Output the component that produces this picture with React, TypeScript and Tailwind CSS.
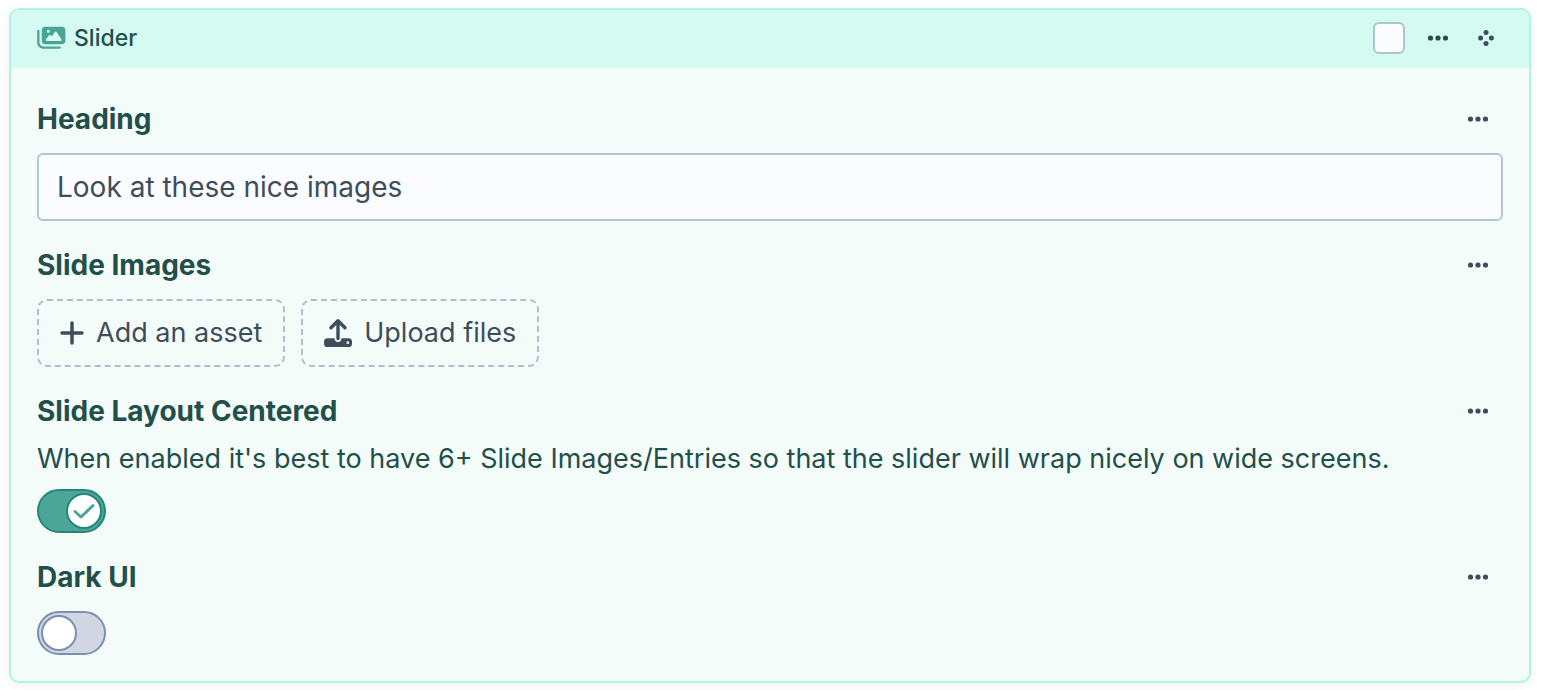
import { useId, useState, type ReactNode } from "react";

function SliderIcon() {
  return (
    <svg viewBox="0 0 29 24" className="h-6 w-[29px] shrink-0 text-[#4aa596]" aria-hidden="true">
      <path
        d="M1.3 5V16.600a5 5 0 0 0 5 5H22.8"
        fill="none"
        stroke="currentColor"
        strokeWidth="2.300"
        strokeLinecap="round"
      />
      <path
        fillRule="evenodd"
        fill="currentColor"
        d="M8.400 .8h16.400a3.600 3.600 0 0 1 3.600 3.600v10.200a3.600 3.600 0 0 1-3.600 3.600H8.400a3.600 3.600 0 0 1-3.600-3.600V4.400a3.600 3.600 0 0 1 3.600-3.600ZM11.300 3.800a1.500 1.500 0 1 0 0 3 1.500 1.500 0 0 0 0-3ZM18.700 5.600a1.100 1.100 0 0 0-.9.500l-3 4.500-1-1.300a1.100 1.100 0 0 0-1.700 0l-3 4a1.100 1.100 0 0 0 .9 1.800h13.600a1.100 1.100 0 0 0 .9-1.700l-4.900-7.300a1.100 1.100 0 0 0-.9-.5Z"
      />
    </svg>
  );
}

function DotsIcon() {
  return (
    <svg viewBox="0 0 22 6" className="h-[6px] w-[22px]" fill="currentColor" aria-hidden="true">
      <circle cx="3.500" cy="3" r="2.600" />
      <circle cx="11" cy="3" r="2.600" />
      <circle cx="18.500" cy="3" r="2.600" />
    </svg>
  );
}

function MoveIcon() {
  return (
    <svg viewBox="0 0 18 18" className="size-[18px]" fill="currentColor" aria-hidden="true">
      <circle cx="9" cy="3.600" r="2.500" />
      <circle cx="3.600" cy="9" r="2.500" />
      <circle cx="14.400" cy="9" r="2.500" />
      <circle cx="9" cy="14.400" r="2.500" />
    </svg>
  );
}

function PlusIcon() {
  return (
    <svg viewBox="0 0 24 24" className="size-6" aria-hidden="true">
      <path d="M12 2v20M2 12h20" fill="none" stroke="currentColor" strokeWidth="3.500" strokeLinecap="round" />
    </svg>
  );
}

function UploadIcon() {
  return (
    <svg viewBox="0 0 28 28" className="size-7" aria-hidden="true">
      <path
        fillRule="evenodd"
        fill="currentColor"
        d="M3.500 19.200h7.100v.3a3.400 3.400 0 0 0 6.800 0v-.3h7.100a3.500 3.500 0 0 1 3.500 3.500v2a3.500 3.500 0 0 1-3.500 3.500H3.500A3.500 3.500 0 0 1 0 24.700v-2a3.500 3.500 0 0 1 3.500-3.500ZM23.800 22.300a1.400 1.400 0 1 0 0 2.800 1.400 1.400 0 0 0 0-2.800Z"
      />
      <path
        d="M14 19.500V2.200M7 8.800l7-7 7 7"
        fill="none"
        stroke="currentColor"
        strokeWidth="3.400"
        strokeLinecap="round"
        strokeLinejoin="round"
      />
    </svg>
  );
}

function CheckIcon() {
  return (
    <svg viewBox="0 0 22 18" className="h-[18px] w-[22px] text-[#4aa596]" aria-hidden="true">
      <path
        d="M2 9.500l6 5.500L20 3.500"
        fill="none"
        stroke="currentColor"
        strokeWidth="3"
        strokeLinecap="round"
        strokeLinejoin="round"
      />
    </svg>
  );
}

interface FieldProps {
  label: string;
  htmlFor?: string;
  instructions?: string;
  children: ReactNode;
}

function Field({ label, htmlFor, instructions, children }: FieldProps) {
  return (
    <div>
      <div className="flex h-9 items-center justify-between">
        {htmlFor ? (
          <label htmlFor={htmlFor} className="text-[28px] leading-9 font-bold">
            {label}
          </label>
        ) : (
          <h3 className="text-[28px] leading-9 font-bold">{label}</h3>
        )}
        <button
          type="button"
          aria-label={`${label} actions`}
          className="flex h-9 w-[50px] items-center justify-center text-[#3f4d5a]"
        >
          <DotsIcon />
        </button>
      </div>
      {instructions && <p className="mt-3 -mb-1 text-[27px] leading-9">{instructions}</p>}
      <div className="mt-4">{children}</div>
    </div>
  );
}

interface SwitchProps {
  id: string;
  on: boolean;
  onChange: (on: boolean) => void;
}

function Switch({ id, on, onChange }: SwitchProps) {
  return (
    <label
      htmlFor={id}
      className="flex h-11 w-[69px] cursor-pointer items-center rounded-full border-2 border-[#7b8fae] bg-[#d0d7e3] p-[2px] has-checked:justify-end has-checked:border-[#26867a] has-checked:bg-[#4da598]"
    >
      <input
        id={id}
        type="checkbox"
        role="switch"
        checked={on}
        onChange={(e) => onChange(e.target.checked)}
        className="peer sr-only"
      />
      <span className="flex size-9 items-center justify-center rounded-full border-2 border-[#7b8fae] bg-white peer-checked:border-[#26867a]">
        {on && <CheckIcon />}
      </span>
    </label>
  );
}

const assetButton =
  "flex h-[68px] items-center gap-3 rounded-[10px] border-2 border-dashed border-[#aebdd0] px-[21px] text-[27px] leading-9 text-[#3f4d5a]";

export default function App() {
  const id = useId();
  const [selected, setSelected] = useState(false);
  const [heading, setHeading] = useState("Look at these nice images");
  const [centered, setCentered] = useState(true);
  const [darkUi, setDarkUi] = useState(false);

  return (
    <main className="bg-white pt-2 pr-[13px] pb-2 pl-[9px] font-['Inter',sans-serif] text-[#234f4b]">
      <section className="overflow-hidden rounded-[10px] border-2 border-[#aef5e3] bg-[#f3fcf9] shadow-[0_2px_12px_rgba(0,0,0,0.06)]">
        <header className="flex h-[58px] items-center bg-[#d5faf1] pr-[19px] pb-[2px] pl-[26px]">
          <SliderIcon />
          <h2 className="ml-2 text-[23px] leading-8 font-medium">Slider</h2>
          <div className="ml-auto flex items-center">
            <input
              type="checkbox"
              aria-label="Select block"
              checked={selected}
              onChange={(e) => setSelected(e.target.checked)}
              className="mr-[9px] size-8 appearance-none rounded-md border-2 border-[#acc6d1] bg-[#fbfcff] checked:bg-[#4da598]"
            />
            <button type="button" aria-label="Block actions" className="flex size-12 items-center justify-center">
              <DotsIcon />
            </button>
            <button
              type="button"
              aria-label="Reorder"
              className="flex size-12 cursor-move items-center justify-center text-[#3f4d5a]"
            >
              <MoveIcon />
            </button>
          </div>
        </header>

        <div className="flex flex-col gap-[26px] px-[26px] pt-[33px] pb-[26px]">
          <Field label="Heading" htmlFor={`${id}-heading`}>
            <input
              id={`${id}-heading`}
              type="text"
              value={heading}
              onChange={(e) => setHeading(e.target.value)}
              className="block h-[68px] w-full rounded-md border-2 border-[#b4c5d3] bg-[#fbfcff] px-[18px] text-[28px] leading-9 text-[#3f4d5a] outline-none"
            />
          </Field>

          <Field label="Slide Images">
            <div className="flex flex-wrap gap-4">
              <button type="button" className={assetButton}>
                <PlusIcon />
                Add an asset
              </button>
              <button type="button" className={assetButton}>
                <UploadIcon />
                Upload files
              </button>
            </div>
          </Field>

          <Field
            label="Slide Layout Centered"
            htmlFor={`${id}-centered`}
            instructions="When enabled it's best to have 6+ Slide Images/Entries so that the slider will wrap nicely on wide screens."
          >
            <Switch id={`${id}-centered`} on={centered} onChange={setCentered} />
          </Field>

          <Field label="Dark UI" htmlFor={`${id}-dark-ui`}>
            <Switch id={`${id}-dark-ui`} on={darkUi} onChange={setDarkUi} />
          </Field>
        </div>
      </section>
    </main>
  );
}
